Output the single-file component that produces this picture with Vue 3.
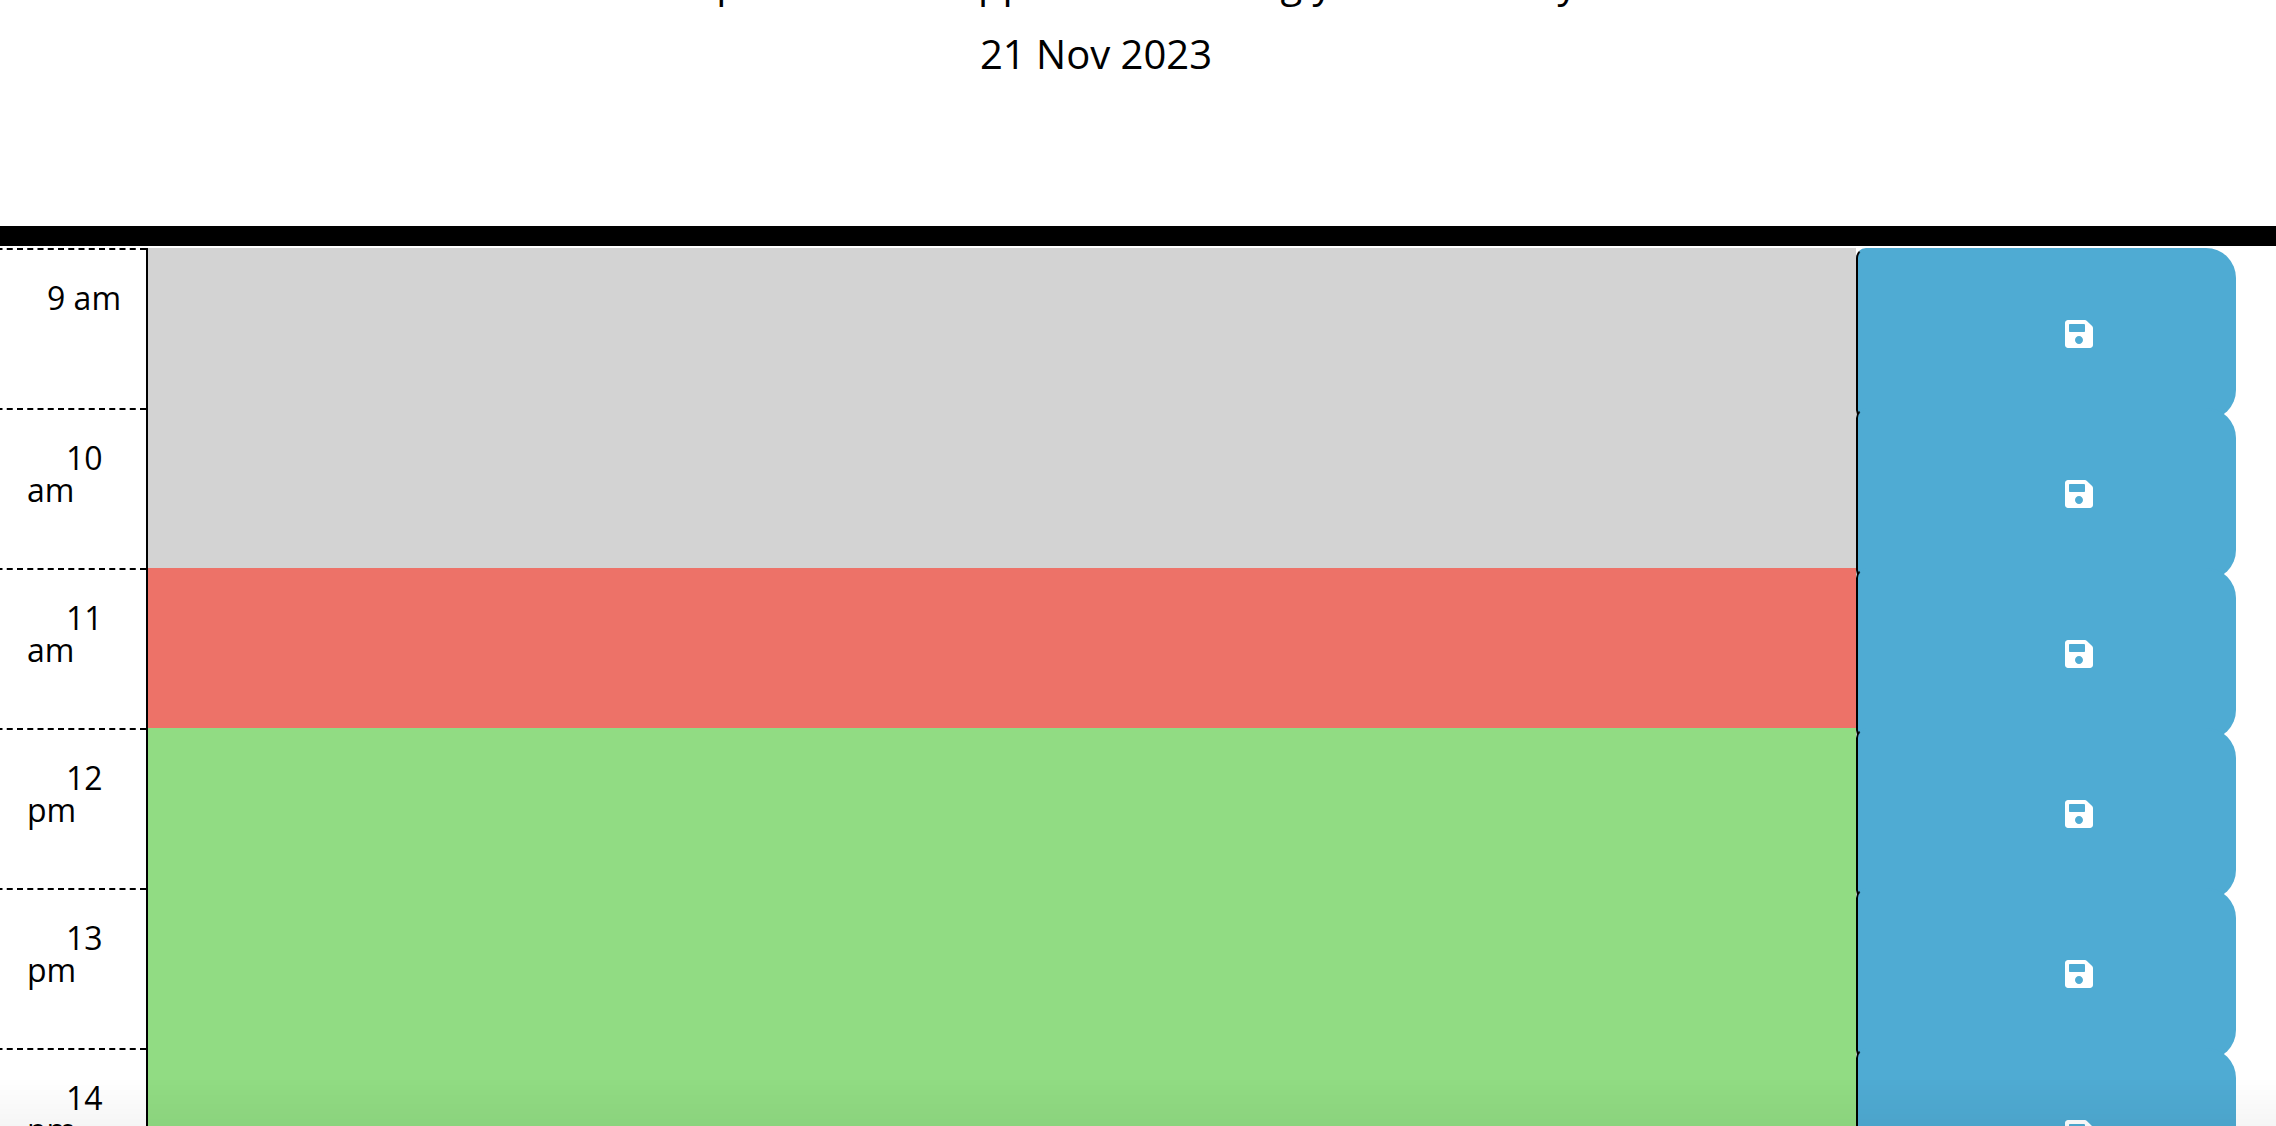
<script setup>
import { reactive } from 'vue'

const hours = reactive([
  { hour: 9, suffix: 'am', state: 'past', note: '' },
  { hour: 10, suffix: 'am', state: 'past', note: '' },
  { hour: 11, suffix: 'am', state: 'present', note: '' },
  { hour: 12, suffix: 'pm', state: 'future', note: '' },
  { hour: 13, suffix: 'pm', state: 'future', note: '' },
  { hour: 14, suffix: 'pm', state: 'future', note: '' }
])
</script>

<template>
  <div class="page">
    <header class="intro">
      <p>A simple calendar app for scheduling your work day</p>
      <p>21 Nov 2023</p>
    </header>

    <main class="planner">
      <div v-for="slot in hours" :key="slot.hour" class="row">
        <label class="hour" :class="{ wide: slot.hour > 9 }" :for="`note-${slot.hour}`">
          {{ slot.hour }} {{ slot.suffix }}
        </label>
        <textarea :id="`note-${slot.hour}`" v-model="slot.note" class="note" :class="slot.state"></textarea>
        <button class="save" type="button" aria-label="Save">
          <svg viewBox="0 32 448 448" aria-hidden="true">
            <path
              fill="currentColor"
              fill-rule="evenodd"
              d="M433.941 129.941l-83.882-83.882A48 48 0 0 0 316.118 32H48C21.49 32 0 53.49 0 80v352c0 26.51 21.49 48 48 48h352c26.51 0 48-21.49 48-48V163.882a48 48 0 0 0-14.059-33.941zM224 416c-35.346 0-64-28.654-64-64s28.654-64 64-64 64 28.654 64 64-28.654 64-64 64zm96-304.52V212c0 6.627-5.373 12-12 12H76c-6.627 0-12-5.373-12-12V108c0-6.627 5.373-12 12-12h228.52c3.183 0 6.235 1.264 8.485 3.515l3.48 3.48A11.996 11.996 0 0 1 320 111.48z"
            />
          </svg>
        </button>
      </div>
    </main>
    <div class="fade"></div>
  </div>
</template>

<style>
html,
body {
  margin: 0;
  background: #fff;
}
</style>

<style scoped>
.page {
  height: 100vh;
  overflow: hidden;
  font-family: 'Open Sans', 'Noto Sans', sans-serif;
  font-size: 32px;
  line-height: 32px;
  color: #000;
}

.intro {
  margin-top: -48px;
  padding: 0 84px 130px 0;
  border-bottom: 20px solid #000;
  text-align: center;
  font-size: 40px;
  line-height: 60px;
}

.intro p {
  margin: 0 0 12px;
}

.planner {
  margin-left: -24px;
  padding: 2px 40px 0 0;
}

.row {
  display: grid;
  grid-template-columns: 170px minmax(0, 1fr) 380px;
  height: 160px;
}

.hour {
  box-sizing: border-box;
  padding: 32px 16px 0 51px;
  border-top: 2px dashed #000;
  text-indent: 20px;
}

.hour.wide {
  text-indent: 39px;
}

.note {
  box-sizing: border-box;
  width: 100%;
  height: 100%;
  margin: 0;
  padding: 16px;
  border: 0;
  border-left: 2px solid #000;
  border-radius: 0;
  outline: 0;
  resize: none;
  font: inherit;
}

.past {
  background: #d3d3d3;
}

.present {
  background: #ed7268;
}

.future {
  background: #91dc83;
}

.save {
  box-sizing: border-box;
  display: flex;
  align-items: center;
  justify-content: center;
  height: 172px;
  padding: 0 0 0 66px;
  border: 2px solid #4fabd3;
  border-left-color: #000;
  border-radius: 10px 30px 30px 10px;
  background: #4fabd3;
  color: #fff;
}

.save svg {
  width: 28px;
  height: 28px;
}

.fade {
  position: fixed;
  inset: auto 0 0;
  height: 48px;
  background: linear-gradient(rgba(0, 0, 0, 0), rgba(0, 0, 0, 0.04));
  pointer-events: none;
}
</style>
